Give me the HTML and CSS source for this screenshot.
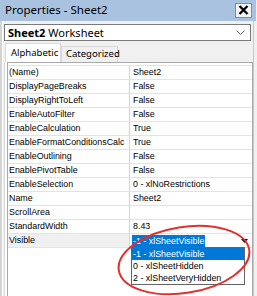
FILE: index.html
```html
<!DOCTYPE html>
<html lang="en">
<head>
  <meta charset="UTF-8" />
  <title>Properties - Sheet2</title>
  <link rel="stylesheet" href="styles.css">
</head>
<body>
  <div class="screen">
    <div class="backdrop"></div>
    <div class="window">
      <div class="titlebar">
        <span class="title">Properties - Sheet2</span>
        <span class="close">
          <svg width="11" height="10" viewBox="0 0 11 10"><path d="M1.5 1 L9.5 9 M9.5 1 L1.5 9" stroke="#000" stroke-width="2.3" /></svg>
        </span>
      </div>

      <div class="objbox">
        <span><b>Sheet2</b> Worksheet</span>
        <svg class="chevron" width="9" height="5" viewBox="0 0 9 5"><path d="M0.5 0.5 L4.5 4.5 L8.5 0.5" fill="none" stroke="#606060" stroke-width="1" /></svg>
      </div>

      <div class="tabs">
        <span class="tab active">Alphabetic</span>
        <span class="tab">Categorized</span>
      </div>

      <div class="grid">
        <div class="row"><div class="name">(Name)</div><div class="val">Sheet2</div></div>
        <div class="row"><div class="name">DisplayPageBreaks</div><div class="val">False</div></div>
        <div class="row"><div class="name">DisplayRightToLeft</div><div class="val">False</div></div>
        <div class="row"><div class="name">EnableAutoFilter</div><div class="val">False</div></div>
        <div class="row"><div class="name">EnableCalculation</div><div class="val">True</div></div>
        <div class="row"><div class="name">EnableFormatConditionsCalc</div><div class="val">True</div></div>
        <div class="row"><div class="name">EnableOutlining</div><div class="val">False</div></div>
        <div class="row"><div class="name">EnablePivotTable</div><div class="val">False</div></div>
        <div class="row"><div class="name">EnableSelection</div><div class="val">0 - xlNoRestrictions</div></div>
        <div class="row"><div class="name">Name</div><div class="val">Sheet2</div></div>
        <div class="row"><div class="name">ScrollArea</div><div class="val"></div></div>
        <div class="row"><div class="name">StandardWidth</div><div class="val">8.43</div></div>
        <div class="row current">
          <div class="name">Visible</div>
          <div class="val edit">
            <span class="picked">-1 - xlSheetVisible</span>
            <span class="drop"><svg width="7" height="4" viewBox="0 0 7 4"><path d="M0 0 H7 L3.5 4 Z" fill="#000" /></svg></span>
          </div>
          <ul class="options">
            <li class="on">-1 - xlSheetVisible</li>
            <li>0 - xlSheetHidden</li>
            <li>2 - xlSheetVeryHidden</li>
          </ul>
        </div>
      </div>
    </div>

    <svg class="mark" width="257" height="296" viewBox="0 0 257 296">
      <ellipse cx="184" cy="260" rx="66" ry="33" transform="rotate(-9 184 260)" fill="none" stroke="#e3302f" stroke-width="2" />
    </svg>
  </div>
</body>
</html>
```

FILE: styles.css
```css
body {
  margin: 0;
  background: #f0f0f0;
  font-family: "Liberation Sans", Arial, sans-serif;
  color: #000;
}

.screen {
  position: relative;
  display: flex;
  width: 257px;
  height: 296px;
  overflow: hidden;
}

.backdrop {
  width: 2px;
  background: #d4d4d4;
  border-right: 1px solid #ffffff;
}

.window {
  flex: 1;
  display: flex;
  flex-direction: column;
  background: #f0f0f0;
  border-right: 1px solid #c8c8c8;
  margin-right: 3px;
}

.titlebar {
  height: 21px;
  display: flex;
  align-items: center;
  justify-content: space-between;
  background: #a9c2df;
  margin-left: -3px;
  margin-right: -3px;
  padding: 0 2px 0 5px;
}

.title {
  font-family: "Noto Sans", sans-serif;
  font-size: 11.5px;
  margin-top: -3px;
}

.close {
  width: 15px;
  height: 13px;
  display: flex;
  align-items: center;
  justify-content: center;
  background: #f4f4f4;
  border: 1px solid #8a8a8a;
  margin-right: 2px;
  margin-top: -1px;
}

.objbox {
  height: 15px;
  margin: 3px 2px 0 1px;
  display: flex;
  align-items: center;
  justify-content: space-between;
  background: #fff;
  border: 1px solid #7a7a7a;
  padding: 0 5px 0 3px;
  font-family: "Noto Sans", sans-serif;
  font-size: 11px;
}

.objbox b {
  font-weight: 700;
}

.tabs {
  display: flex;
  align-items: flex-end;
  margin: 2px 0 0 2px;
  height: 19px;
}

.tab {
  box-sizing: border-box;
  width: 57px;
  font-family: "Noto Sans", sans-serif;
  font-size: 9.5px;
  height: 16px;
  line-height: 14px;
  padding-left: 4px;
  white-space: nowrap;
  border: 1px solid #d9d9d9;
  border-bottom: none;
  background: #f0f0f0;
}

.tab.active {
  width: 56px;
  height: 19px;
  line-height: 17px;
  background: #fff;
  padding-left: 5px;
}

.grid {
  flex: 1;
  margin: 0 0 0 4px;
  background: #fff;
  border: 1px solid #a9a9a9;
  border-bottom: none;
  box-shadow: -2px 0 0 #fff, -3px 0 0 #d9d9d9;
  padding-top: 2px;
}

.row {
  position: relative;
  display: flex;
  height: 13px;
  border-top: 1px solid #e3e3e3;
  font-size: 8.9px;
  line-height: 13px;
}

.row:last-child {
  border-bottom: 1px solid #e3e3e3;
}

.name {
  width: 120px;
  padding-left: 1px;
  white-space: nowrap;
  overflow: hidden;
  border-right: 1px solid #d4d4d4;
}

.val {
  flex: 1;
  padding-left: 3px;
  white-space: nowrap;
}

.current .name {
  background: #f0f0f0;
}

.edit {
  display: flex;
  align-items: center;
  justify-content: space-between;
  padding-left: 2px;
}

.picked {
  background: #0078d7;
  color: #fff;
  line-height: 12px;
  padding: 0 1px;
}

.drop {
  width: 9px;
  height: 12px;
  display: flex;
  align-items: center;
  justify-content: center;
  margin-right: 3px;
}

.options {
  position: absolute;
  top: 13px;
  left: 123px;
  width: 112px;
  margin: 0;
  padding: 0;
  list-style: none;
  background: #fff;
  border: 1px solid #646464;
}

.options li {
  height: 12px;
  line-height: 12px;
  padding-left: 1px;
}

.options li.on {
  background: #0078d7;
  color: #fff;
}

.mark {
  position: absolute;
  left: 0;
  top: 0;
  pointer-events: none;
}
```
